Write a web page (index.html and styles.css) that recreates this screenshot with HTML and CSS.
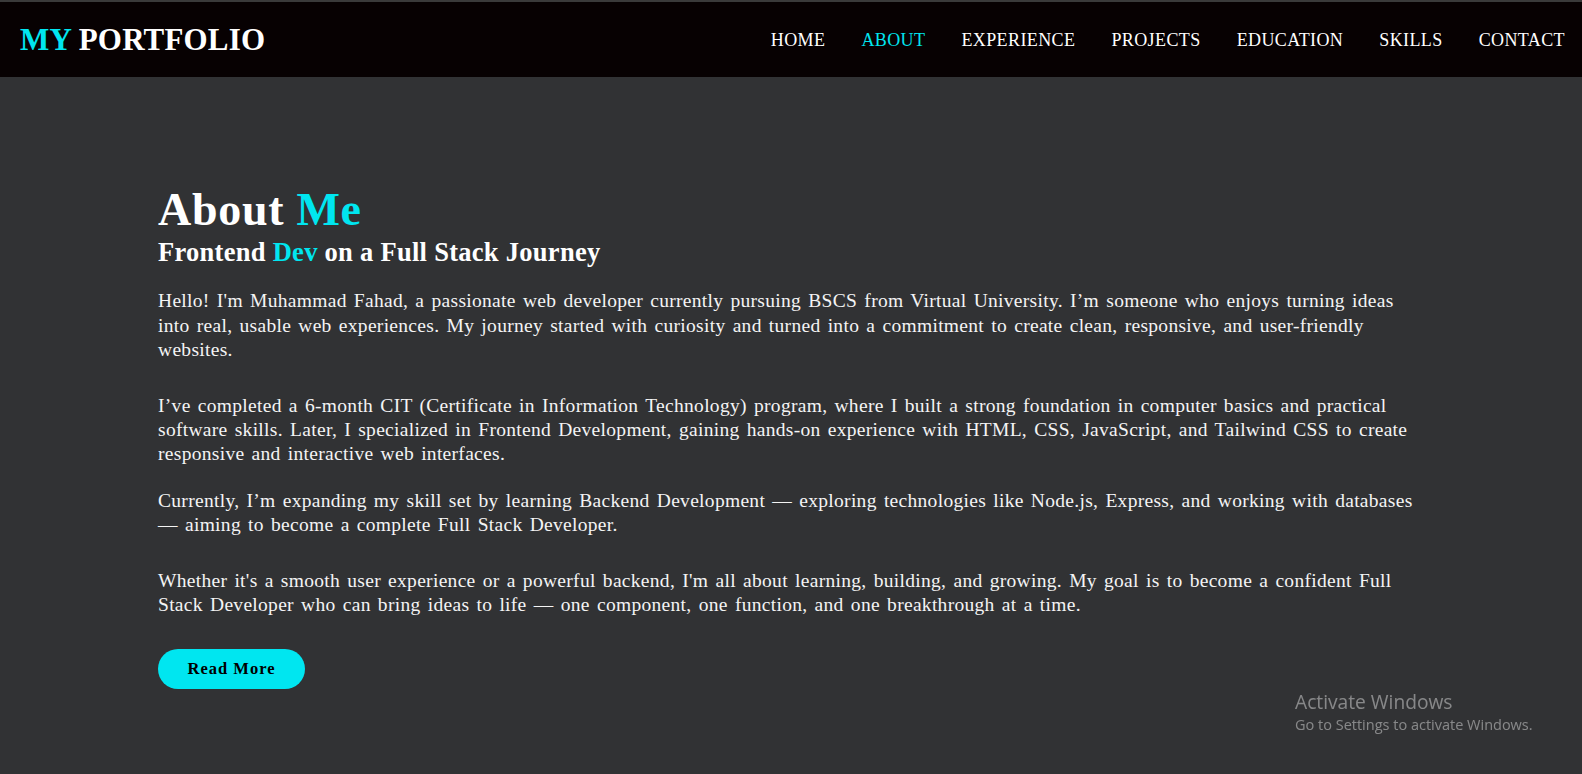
FILE: index.html
```html
<!DOCTYPE html>
<html lang="en">
<head>
<meta charset="utf-8">
<title>My Portfolio</title>
<link rel="stylesheet" href="styles.css">
</head>
<body>
<header class="site-header">
  <div class="logo"><span class="accent">MY</span> PORTFOLIO</div>
  <nav class="nav">
    <a href="#" class="nav-link">HOME</a>
    <a href="#" class="nav-link active">ABOUT</a>
    <a href="#" class="nav-link">EXPERIENCE</a>
    <a href="#" class="nav-link">PROJECTS</a>
    <a href="#" class="nav-link">EDUCATION</a>
    <a href="#" class="nav-link">SKILLS</a>
    <a href="#" class="nav-link">CONTACT</a>
  </nav>
</header>
<main class="about">
  <div class="about-inner">
    <h1 class="about-title">About <span class="accent">Me</span></h1>
    <h2 class="about-sub">Frontend <span class="accent">Dev</span> on a Full Stack Journey</h2>
    <p class="para p1">Hello! I'm Muhammad Fahad, a passionate web developer currently pursuing BSCS from Virtual University. I’m someone who enjoys turning ideas into real, usable web experiences. My journey started with curiosity and turned into a commitment to create clean, responsive, and user-friendly websites.</p>
    <p class="para p2">I’ve completed a 6-month CIT (Certificate in Information Technology) program, where I built a strong foundation in computer basics and practical software skills. Later, I specialized in Frontend Development, gaining hands-on experience with HTML, CSS, JavaScript, and Tailwind CSS to create responsive and interactive web interfaces.</p>
    <p class="para p3">Currently, I’m expanding my skill set by learning Backend Development — exploring technologies like Node.js, Express, and working with databases — aiming to become a complete Full Stack Developer.</p>
    <p class="para p4">Whether it's a smooth user experience or a powerful backend, I'm all about learning, building, and growing. My goal is to become a confident Full Stack Developer who can bring ideas to life — one component, one function, and one breakthrough at a time.</p>
    <a href="#" class="btn">Read More</a>
  </div>
</main>
<div class="watermark">
  <div class="wm-title">Activate Windows</div>
  <div class="wm-sub">Go to Settings to activate Windows.</div>
</div>
</body>
</html>
```

FILE: styles.css
```css
* { box-sizing: border-box; }

html, body {
  margin: 0;
  padding: 0;
}

body {
  background: #313234;
  color: #ffffff;
  font-family: "Liberation Serif", "Times New Roman", serif;
  min-height: 774px;
  overflow: hidden;
}

.accent { color: #00e6f0; }

.site-header {
  height: 77px;
  border-top: 2px solid #3a3a3a;
  background: #070102;
  display: flex;
  align-items: center;
  justify-content: space-between;
  padding: 0 17px 0 20px;
}

.logo {
  font-size: 31px;
  font-weight: bold;
  letter-spacing: 0.17px;
  color: #ffffff;
  line-height: 1;
}

.nav {
  display: flex;
  gap: 36px;
}

.nav-link {
  color: #ffffff;
  text-decoration: none;
  font-size: 18px;
  letter-spacing: 0.4px;
  line-height: 1;
}

.nav-link.active { color: #00e6f0; }

.about {
  padding: 108px 0 0 158px;
}

.about-inner {
  width: 1258px;
}

.about-title {
  margin: 0;
  font-size: 46px;
  line-height: 50.6px;
  letter-spacing: 0.7px;
  font-weight: bold;
}

.about-sub {
  margin: 1px 0 0;
  font-size: 26.5px;
  line-height: 31.8px;
  letter-spacing: 0.28px;
  font-weight: bold;
}

.para {
  font-size: 19.5px;
  line-height: 24.4px;
  letter-spacing: 0.3px;
  word-spacing: 2px;
  margin: 0;
  color: #f4f4f4;
}

.p1 { margin-top: 21px; }
.p2 { margin-top: 31px; }
.p3 { margin-top: 22px; }
.p4 { margin-top: 31px; }

.btn {
  display: inline-flex;
  align-items: center;
  justify-content: center;
  margin-top: 32px;
  width: 147px;
  height: 40px;
  border-radius: 20px;
  background: #00e6f0;
  color: #000000;
  text-decoration: none;
  font-weight: bold;
  font-size: 16.5px;
  letter-spacing: 1px;
}

.watermark {
  position: fixed;
  left: 1295px;
  top: 689px;
  color: rgba(255, 255, 255, 0.42);
  font-family: "Open Sans", "Noto Sans", sans-serif;
}

.wm-title {
  font-size: 19.2px;
  line-height: 25px;
}

.wm-sub {
  font-size: 14.5px;
  line-height: 22px;
}
```
